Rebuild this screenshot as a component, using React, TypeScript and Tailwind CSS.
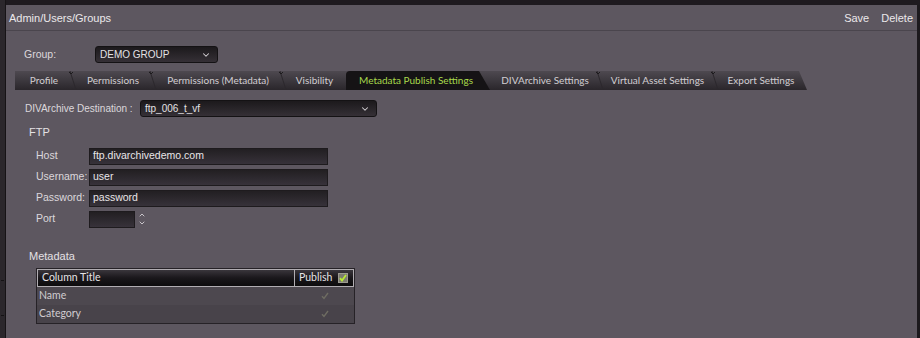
import { ChevronDown, ChevronUp } from 'lucide-react'

type Tab = { label: string; width: number; notch?: boolean }

const tabs: Tab[] = [
  { label: 'Profile', width: 58, notch: true },
  { label: 'Permissions', width: 80, notch: true },
  { label: 'Permissions (Metadata)', width: 130, notch: true },
  { label: 'Visibility', width: 63 },
  { label: 'Metadata Publish Settings', width: 144 },
  { label: 'DIVArchive Settings', width: 110, notch: true },
  { label: 'Virtual Asset Settings', width: 115, notch: true },
  { label: 'Export Settings', width: 92 },
]

const ACTIVE = 'Metadata Publish Settings'

function Select({ value, width }: { value: string; width: number }) {
  return (
    <div
      className="flex h-[17px] items-center justify-between rounded-[3px] border border-[#141214] bg-gradient-to-b from-[#1c191c] to-[#353036] pl-[4px] pr-[6px] text-[10px] text-[#e4e1e4]"
      style={{ width }}
    >
      <span>{value}</span>
      <ChevronDown className="h-[10px] w-[10px] text-[#d8d4d8]" strokeWidth={2.5} />
    </div>
  )
}

function Field({ label, value, width = 239 }: { label: string; value?: string; width?: number }) {
  return (
    <div className="flex h-[17px] items-center">
      <span className="w-[53px] whitespace-nowrap text-[10.5px] text-[#dcd8dc]">{label}</span>
      <div
        className="flex h-[17px] items-center border border-[#1e1b1e] bg-gradient-to-b from-[#221f22] to-[#37323a] pl-[3px] text-[10.5px] text-[#e8e5e8]"
        style={{ width }}
      >
        {value}
      </div>
    </div>
  )
}

function Check({ faint }: { faint?: boolean }) {
  return (
    <svg width="10" height="10" viewBox="0 0 10 10">
      {!faint && <rect x="0.5" y="0.5" width="9" height="9" fill="#7c7b70" stroke="#9c9a90" />}
      <path
        d="M2 5.2 L4 7.5 L8 2"
        fill="none"
        stroke={faint ? '#6e6c62' : '#b8ea34'}
        strokeWidth={faint ? 1.4 : 1.8}
      />
    </svg>
  )
}

export default function App() {
  return (
    <div className="flex h-[338px] w-[920px] overflow-hidden bg-[#1e1a1f] font-['Liberation_Sans',sans-serif]">
      {/* left edge */}
      <div className="flex w-[6px] shrink-0 flex-col justify-end border-r border-[#161316] bg-[#2b272c] pb-[22px]">
        <div className="ml-[1px] h-[36px] w-[2px] border-y border-dotted border-[#141214]" />
      </div>

      <div className="mt-[5px] flex-1 border-r-[3px] border-[#1c191d] bg-[#5d5760]">
        {/* header */}
        <div className="flex h-[26px] items-center justify-between border-b border-[#4a454d] pl-[3px] pr-[4px] pt-[2px] text-[11px] text-[#ebe8eb]">
          <span>Admin/Users/Groups</span>
          <div className="flex gap-[12px]">
            <span>Save</span>
            <span>Delete</span>
          </div>
        </div>

        {/* group */}
        <div className="mt-[15px] flex items-center pl-[18px]">
          <span className="w-[71px] text-[10.5px] text-[#dcd8dc]">Group:</span>
          <Select value="DEMO GROUP" width={123} />
        </div>

        {/* tabs */}
        <div className="ml-[9px] mt-[8px] flex h-[19px] w-[792px] font-['Lato',sans-serif] text-[10px] [clip-path:polygon(0_0,calc(100%-8px)_0,100%_100%,0_100%)] bg-gradient-to-b from-[#4e4950] via-[#3c383e] to-[#2a262b]">
          {tabs.map((t) => {
            const active = t.label === ACTIVE
            return (
              <div
                key={t.label}
                className={`relative flex shrink-0 items-center justify-center ${
                  active
                    ? 'rounded-tl-[4px] bg-[#151315] text-[#a8d94c] [clip-path:polygon(0_0,calc(100%-11px)_0,100%_100%,0_100%)]'
                    : 'text-[#d2ced2]'
                }`}
                style={{ width: t.width }}
              >
                <span className={active ? 'pr-[4px]' : ''}>{t.label}</span>
                {!active && t.label !== 'Export Settings' && t.label !== 'Visibility' && (
                  <svg className="absolute right-[-4px] top-0" width="8" height="19" viewBox="0 0 8 19">
                    <path d="M1 0 L7 19" stroke="#2c282d" strokeWidth="1" />
                    {t.notch && <path d="M0 1 L2 3 L4 1" fill="none" stroke="#1c1a1c" strokeWidth="1" />}
                  </svg>
                )}
              </div>
            )
          })}
        </div>

        {/* destination */}
        <div className="mt-[10px] flex items-center pl-[19px]">
          <span className="w-[115px] whitespace-nowrap text-[10px] text-[#dcd8dc]">DIVArchive Destination :</span>
          <Select value="ftp_006_t_vf" width={237} />
        </div>

        <div className="ml-[23px] mt-[7px] text-[11px] text-[#e4e1e4]">FTP</div>

        <div className="ml-[30px] mt-[7px] flex flex-col gap-[4px]">
          <Field label="Host" value="ftp.divarchivedemo.com" />
          <Field label="Username:" value="user" />
          <Field label="Password:" value="password" />
          <div className="flex items-center">
            <Field label="Port" width={46} />
            <div className="ml-[2px] flex flex-col text-[#e0dce0]">
              <ChevronUp className="h-[8px] w-[10px]" strokeWidth={2.5} />
              <ChevronDown className="h-[8px] w-[10px]" strokeWidth={2.5} />
            </div>
          </div>
        </div>

        <div className="ml-[23px] mt-[20px] text-[11px] text-[#e4e1e4]">Metadata</div>

        {/* table */}
        <div className="ml-[30px] mt-[4px] w-[319px] border border-[#262227] font-['Lato',sans-serif] text-[10.5px] text-[#d0ccd0]">
          <div className="flex h-[18px] bg-gradient-to-b from-[#3e3a40] via-[#1a171b] to-[#0b0a0b]">
            <div className="flex flex-1 items-center border border-[#b1adb2] pl-[4px] text-[#e6e3e6]">Column Title</div>
            <div className="flex w-[59px] items-center gap-[6px] border border-l-0 border-[#b1adb2] pl-[4px] text-[#e6e3e6]">
              Publish
              <Check />
            </div>
          </div>
          <div className="flex h-[18px] items-center bg-[#4d484f] pl-[2px]">
            <span className="flex-1">Name</span>
            <span className="w-[34px]"><Check faint /></span>
          </div>
          <div className="flex h-[18px] items-center bg-[#48434a] pl-[2px]">
            <span className="flex-1">Category</span>
            <span className="w-[34px]"><Check faint /></span>
          </div>
        </div>
      </div>
    </div>
  )
}
